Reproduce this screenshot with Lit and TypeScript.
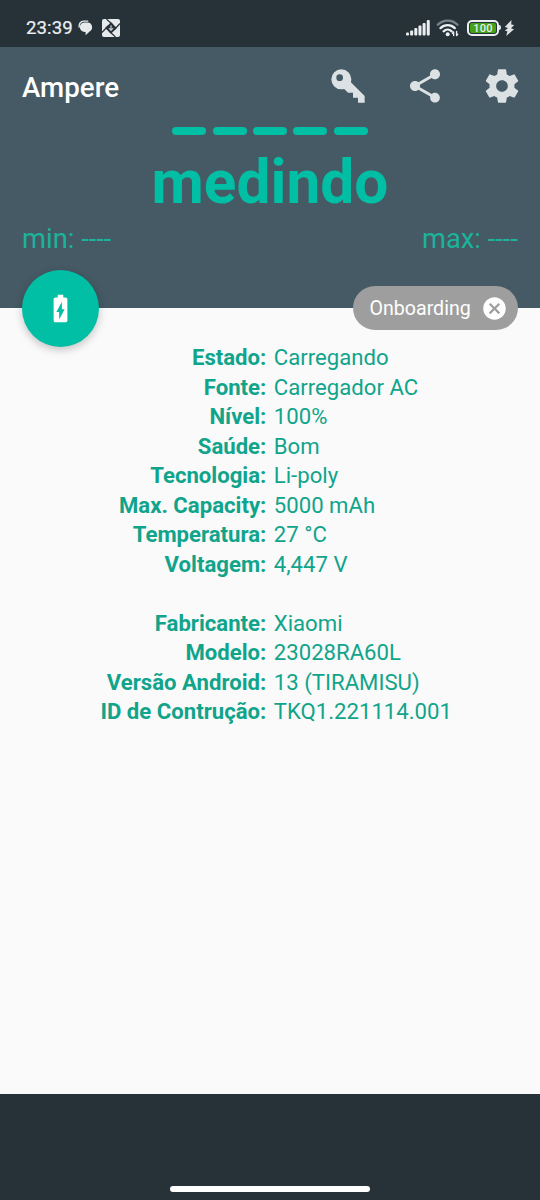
import { LitElement, html, css, svg, nothing } from "lit";
import { customElement } from "lit/decorators.js";

const KEY =
  "M22 18V22H18V19H15V16H12L9.74 13.74C9.19 13.91 8.61 14 8 14A6 6 0 0 1 2 8A6 6 0 0 1 8 2A6 6 0 0 1 14 8C14 8.61 13.91 9.19 13.74 9.74L22 18M7 5A2 2 0 0 0 5 7A2 2 0 0 0 7 9A2 2 0 0 0 9 7A2 2 0 0 0 7 5Z";
const SHARE =
  "M18 16.08c-.76 0-1.44.3-1.96.77L8.91 12.7c.05-.23.09-.46.09-.7s-.04-.47-.09-.7l7.05-4.11c.54.5 1.25.81 2.04.81 1.66 0 3-1.34 3-3s-1.34-3-3-3-3 1.34-3 3c0 .24.04.47.09.7L8.04 9.81C7.5 9.31 6.79 9 6 9c-1.66 0-3 1.34-3 3s1.34 3 3 3c.79 0 1.5-.31 2.04-.81l7.12 4.16c-.05.21-.08.43-.08.65 0 1.61 1.31 2.92 2.92 2.92 1.61 0 2.92-1.31 2.92-2.92s-1.31-2.92-2.92-2.92z";
const GEAR =
  "M19.43 12.98c.04-.32.07-.64.07-.98s-.03-.66-.07-.98l2.11-1.65c.19-.15.24-.42.12-.64l-2-3.46c-.12-.22-.39-.3-.61-.22l-2.49 1c-.52-.4-1.08-.73-1.69-.98l-.38-2.65C14.46 2.18 14.25 2 14 2h-4c-.25 0-.46.18-.49.42l-.38 2.65c-.61.25-1.17.59-1.69.98l-2.49-1c-.23-.09-.49 0-.61.22l-2 3.46c-.13.22-.07.49.12.64l2.11 1.65c-.04.32-.07.65-.07.98s.03.66.07.98l-2.11 1.65c-.19.15-.24.42-.12.64l2 3.46c.12.22.39.3.61.22l2.49-1c.52.4 1.08.73 1.69.98l.38 2.65c.03.24.24.42.49.42h4c.25 0 .46-.18.49-.42l.38-2.65c.61-.25 1.17-.59 1.69-.98l2.49 1c.23.09.49 0 .61-.22l2-3.46c.12-.22.07-.49-.12-.64l-2.11-1.65zM12 15.5c-1.93 0-3.5-1.57-3.5-3.5s1.57-3.5 3.5-3.5 3.5 1.57 3.5 3.5-1.57 3.5-3.5 3.5z";
const BATTERY =
  "M15.67 4H14V2h-4v2H8.33C7.6 4 7 4.6 7 5.33v15.33C7 21.4 7.6 22 8.33 22h7.33c.74 0 1.34-.6 1.34-1.33V5.33C17 4.6 16.4 4 15.67 4zM11 20v-5.5H9L13 7v5.5h2L11 20z";
const CLOSE =
  "M12 2C6.47 2 2 6.47 2 12s4.47 10 10 10 10-4.47 10-10S17.53 2 12 2zm5 13.59L15.59 17 12 13.41 8.41 17 7 15.59 10.59 12 7 8.41 8.41 7 12 10.59 15.59 7 17 8.41 13.41 12 17 15.59z";

const glyph = (d: string, cls: string) =>
  html`<svg class=${cls} viewBox="0 0 24 24"><path d=${d}></path></svg>`;

@customElement("status-bar")
class StatusBar extends LitElement {
  static styles = css`
    :host {
      display: flex;
      align-items: center;
      height: 47px;
      box-sizing: border-box;
      padding: 8px 25px 0 26px;
      background: #263238;
      color: #eceff1;
    }
    .time {
      font-size: 18.6px;
      letter-spacing: 0.1px;
      line-height: 22px;
      flex: 1;
      display: flex;
      align-items: center;
      -webkit-text-stroke: 0.2px #eceff1;
    }
    svg { display: block; flex: none; }
    .bubble { margin-left: 5.5px; }
    .app { margin-left: 8.5px; }
    .wifi { margin-left: 6px; }
    .battery {
      margin-left: 7px;
      width: 32px;
      height: 16px;
      box-sizing: border-box;
      border: 2px solid #eceff1;
      border-radius: 5px;
      padding: 1px;
      display: flex;
    }
    .charge {
      flex: 1;
      border-radius: 2px;
      background: #43a217;
      font-size: 11px;
      font-weight: 500;
      letter-spacing: 0.3px;
      line-height: 11.5px;
      text-align: center;
    }
    .tip {
      width: 2px;
      height: 5px;
      border-radius: 0 2px 2px 0;
      background: #dfe3e5;
    }
    .bolt { margin-left: 3px; }
  `;

  render() {
    const bars = [3, 5, 7.5, 10, 12.5, 15.5];
    return html`
      <div class="time">
        23:39
        <svg class="bubble" width="15" height="16" viewBox="0 0 15 16">
          <path fill="#e6eaec" d="M6.600 2.400h3.100a4.800 4.800 0 0 1 1.900 9L7.600 15.200v-3.300h-1a4.750 4.750 0 0 1 0-9.500z"></path>
          <path fill="none" stroke="#e6eaec" stroke-width="1.400" stroke-linecap="round" d="M1.100 7C.7 3.500 3 1.300 5.600 1.100H9.800"></path>
        </svg>
        <svg class="app" width="18" height="18" viewBox="0 0 18 18">
          <rect width="18" height="18" rx="2" fill="#e6eaec"></rect>
          <path fill="#263238" d="M9 3.200L14.800 9L9 14.800L3.200 9z"></path>
          <path stroke="#263238" stroke-width="1.200" d="M4.500 0L11 6M18 4.500L12 11M13.500 18L7 12M0 13.500L6 7"></path>
          <path stroke="#c5cbce" stroke-width="1.200" fill="none" d="M9 6.300v5M7 9.200L9 11.400L11 9.200"></path>
        </svg>
      </div>
      <svg width="24" height="16" viewBox="0 0 24 16" fill="#eceff1">
        ${bars.map(
          (h, i) => svg`<rect x=${i * 4.15} y=${15.5 - h} width="3" height=${h} rx="1"></rect>`
        )}
      </svg>
      <svg class="wifi" width="24" height="18" viewBox="0 0 24 18" fill="none" stroke-linecap="round" stroke-width="2.300">
        <path stroke="#78848a" d="M1.800 5.700C7.500 .2 16 .2 21.500 5.700"></path>
        <path stroke="#eceff1" d="M4.500 9.100C8.600 5.200 14.800 5.200 18.800 9.100"></path>
        <path stroke="#eceff1" d="M7.600 12.300C10 10 13.300 10 15.700 12.300"></path>
        <circle cx="11.700" cy="15.300" r="2" fill="#eceff1"></circle>
        <path stroke="#eceff1" stroke-width="1.400" d="M17.600 16.500v-3.500M16.500 14.300l1.100-1.300M20.600 12.500v4M21.700 15.200l-1.100 1.300"></path>
      </svg>
      <div class="battery"><div class="charge">100</div></div>
      <div class="tip"></div>
      <svg class="bolt" width="11" height="16" viewBox="0 0 11 16">
        <path fill="#dfe3e5" d="M7.500 0L.8 7L4 7.900L.8 10.800L3.400 11.300L2.200 16L10 9.200L7 8.200L10.200 5.100L7.200 4.600z"></path>
      </svg>
    `;
  }
}

@customElement("app-root")
class AppRoot extends LitElement {
  static styles = css`
    :host {
      display: flex;
      flex-direction: column;
      width: 540px;
      height: 1200px;
      overflow: hidden;
      background: #fafafa;
      font-family: Roboto, "Noto Sans", sans-serif;
      color: #10a48b;
    }
    .header {
      height: 261.400px;
      flex: none;
      background: #455a64;
      display: flex;
      flex-direction: column;
    }
    .toolbar {
      display: flex;
      align-items: center;
      height: 77px;
      padding: 0 18.500px 0 22px;
      gap: 37px;
    }
    .title {
      flex: 1;
      color: #fff;
      font-size: 27.700px;
      font-weight: 500;
      line-height: 32px;
      padding-top: 4px;
    }
    .action {
      display: block;
      width: 40px;
      height: 40px;
      fill: #dce1e4;
    }
    .dashes {
      display: flex;
      justify-content: center;
      gap: 6.400px;
      padding-top: 3px;
    }
    .dash {
      width: 34px;
      height: 8.400px;
      border-radius: 4.200px;
      background: #00bfa5;
    }
    .reading {
      text-align: center;
      font-size: 60.400px;
      font-weight: 700;
      line-height: 72px;
      padding-top: 11.600px;
      color: #00bfa5;
    }
    .range {
      display: flex;
      justify-content: space-between;
      padding: 4px 22px 0;
      font-size: 27.350px;
      line-height: 32px;
      color: #1cb39b;
    }
    .floating {
      display: flex;
      align-items: center;
      justify-content: space-between;
      height: 77px;
      margin: -38.500px 22px 0;
      flex: none;
      position: relative;
    }
    .fab {
      width: 77px;
      height: 77px;
      border-radius: 50%;
      background: #00bfa5;
      box-shadow: 0 3px 8px rgba(0, 0, 0, 0.22);
      display: flex;
      align-items: center;
      justify-content: center;
    }
    .fabicon {
      width: 33px;
      height: 33px;
      fill: #fff;
    }
    .chip {
      display: flex;
      align-items: center;
      justify-content: space-between;
      box-sizing: border-box;
      width: 165px;
      height: 44px;
      border-radius: 22px;
      padding: 0 10px 0 16.500px;
      background: #9e9e9e;
      color: #fff;
      font-size: 19.600px;
    }
    .close {
      width: 27px;
      height: 27px;
      fill: #fff;
    }
    .details {
      flex: 1;
      display: grid;
      grid-template-columns: 266.300px 1fr;
      column-gap: 7.500px;
      grid-auto-rows: 29.500px;
      align-content: start;
      line-height: 29.500px;
      font-size: 22.150px;
      margin-top: -3.900px;
    }
    .label {
      text-align: right;
      font-weight: 700;
    }
    .gap { grid-column: 1 / -1; }
    .nav {
      height: 106px;
      flex: none;
      background: #263238;
      display: flex;
      align-items: flex-end;
      justify-content: center;
      box-sizing: border-box;
      padding-bottom: 8px;
    }
    .handle {
      width: 200px;
      height: 6px;
      border-radius: 3px;
      background: #fff;
    }
  `;

  private groups: [string, string][][] = [
    [
      ["Estado:", "Carregando"],
      ["Fonte:", "Carregador AC"],
      ["Nível:", "100%"],
      ["Saúde:", "Bom"],
      ["Tecnologia:", "Li-poly"],
      ["Max. Capacity:", "5000 mAh"],
      ["Temperatura:", "27 °C"],
      ["Voltagem:", "4,447 V"],
    ],
    [
      ["Fabricante:", "Xiaomi"],
      ["Modelo:", "23028RA60L"],
      ["Versão Android:", "13 (TIRAMISU)"],
      ["ID de Contrução:", "TKQ1.221114.001"],
    ],
  ];

  render() {
    return html`
      <status-bar></status-bar>
      <div class="header">
        <div class="toolbar">
          <div class="title">Ampere</div>
          ${glyph(KEY, "action")} ${glyph(SHARE, "action")} ${glyph(GEAR, "action")}
        </div>
        <div class="dashes">${[0, 1, 2, 3, 4].map(() => html`<div class="dash"></div>`)}</div>
        <div class="reading">medindo</div>
        <div class="range"><span>min: ----</span><span>max: ----</span></div>
      </div>
      <div class="floating">
        <div class="fab">${glyph(BATTERY, "fabicon")}</div>
        <div class="chip"><span>Onboarding</span>${glyph(CLOSE, "close")}</div>
      </div>
      <div class="details">
        ${this.groups.map(
          (rows, i) => html`
            ${i ? html`<div class="gap"></div>` : nothing}
            ${rows.map(
              ([label, value]) => html`<div class="label">${label}</div><div>${value}</div>`
            )}
          `
        )}
      </div>
      <div class="nav"><div class="handle"></div></div>
    `;
  }
}
